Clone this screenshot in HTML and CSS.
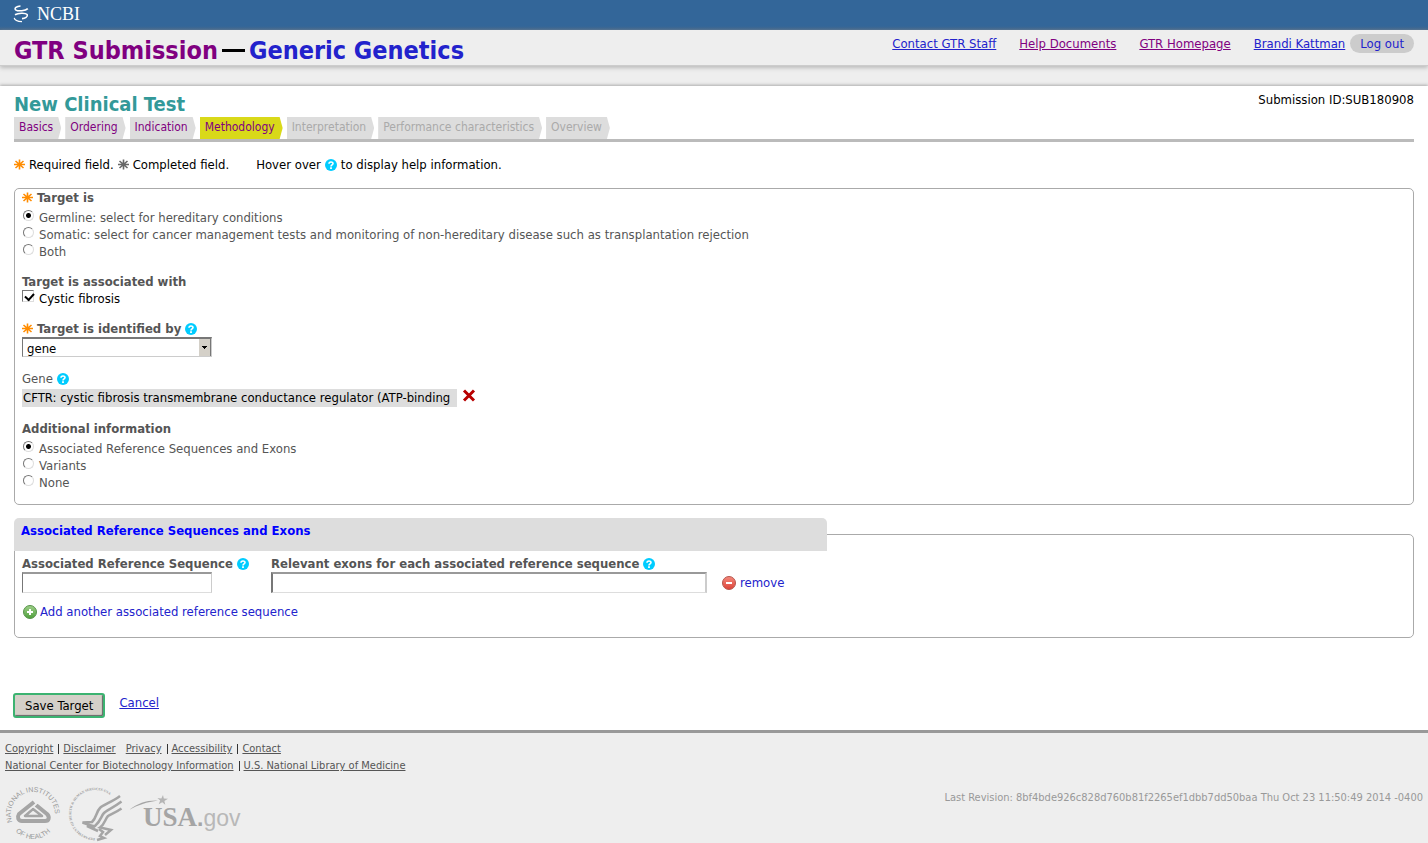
FILE: index.html
```html
<!DOCTYPE html>
<html lang="en">
<head>
    <meta charset="utf-8">
    <meta name="viewport" content="width=device-width, initial-scale=1.0">
    <title>GTR Submission</title>
    <link rel="stylesheet" href="styles.css">
</head>
<body>
    <!-- shared icons -->
    <svg class="defs" aria-hidden="true">
        <symbol id="star" viewBox="0 0 11 11">
            <path d="M5.5 .5v10M1.5 2l8 7M9.5 2l-8 7M0 5.5h11" stroke="currentColor" stroke-width="1.6"/>
        </symbol>
        <symbol id="help" viewBox="0 0 12 12">
            <circle cx="6" cy="6" r="6" fill="#0cf"/>
            <path d="M4 4.7C4 2.4 8 2.4 8 4.5C8 5.9 6 5.8 6 7.4" fill="none" stroke="#fff" stroke-width="1.6"/>
            <path d="M5.1 8.3h1.8v1.6H5.1z" fill="#fff"/>
        </symbol>
        <linearGradient id="greenball" x2="0" y2="1"><stop stop-color="#9fd08a"/><stop offset="1" stop-color="#4f9f3c"/></linearGradient>
        <linearGradient id="redball" x2="0" y2="1"><stop stop-color="#f58a7d"/><stop offset="1" stop-color="#dc4237"/></linearGradient>
    </svg>

    <div class="topbar">
        <a class="ncbi" href="#">
            <svg width="16" height="18" viewBox="0 0 16 18" fill="none" stroke="#fff" aria-hidden="true">
                <path d="M7.5 1C3.5 1.2 1 3.4 2.6 4.8C5 6.5 12.5 6 14.8 3.6" stroke-width="1.6"/>
                <path d="M2 9.8C5 8 12.5 7.6 14.2 9.6C15.2 11.8 12 13.6 9 13.6" stroke-width="1.6"/>
                <path d="M1.2 12.8C1.6 15 5 16.4 9 16.6" stroke-width="1.2"/>
            </svg>
            <span>NCBI</span>
        </a>
    </div>

    <header class="header">
        <h1><a class="visited" href="#">GTR Submission</a> <span class="dash"></span> <a href="#">Generic Genetics</a></h1>
        <nav class="toplinks">
            <a href="#">Contact GTR Staff</a>
            <a class="visited" href="#">Help Documents</a>
            <a class="visited" href="#">GTR Homepage</a>
            <span class="user"><a href="#">Brandi Kattman</a><a class="logout" href="#">Log out</a></span>
        </nav>
    </header>

    <main class="main">
        <div class="titlerow">
            <h2>New Clinical Test</h2>
            <div>Submission ID:SUB180908</div>
        </div>

        <nav class="tabs">
            <a class="tab" href="#">Basics</a>
            <a class="tab" href="#">Ordering</a>
            <a class="tab" href="#">Indication</a>
            <a class="tab current" href="#">Methodology</a>
            <span class="tab off">Interpretation</span>
            <span class="tab off">Performance characteristics</span>
            <span class="tab off">Overview</span>
        </nav>

        <div class="hints">
            <svg class="star"><use href="#star"/></svg>
            <span>Required field.</span>
            <svg class="star done"><use href="#star"/></svg>
            <span class="completed">Completed field.</span>
            <span>Hover over</span>
            <svg class="help"><use href="#help"/></svg>
            <span>to display help information.</span>
        </div>

        <form>
            <div class="panel target">
                <div class="label first"><svg class="star"><use href="#star"/></svg>Target is</div>
                <div class="choices">
                    <label><input type="radio" name="target" checked>Germline: select for hereditary conditions</label>
                    <label><input type="radio" name="target">Somatic: select for cancer management tests and monitoring of non-hereditary disease such as transplantation rejection</label>
                    <label><input type="radio" name="target">Both</label>
                </div>

                <div class="label">Target is associated with</div>
                <div class="choices dark">
                    <label><input type="checkbox" checked>Cystic fibrosis</label>
                </div>

                <div class="label"><svg class="star"><use href="#star"/></svg><label for="idby">Target is identified by</label><svg class="help"><use href="#help"/></svg></div>
                <select id="idby" class="idby">
                    <option>gene</option>
                </select>

                <div class="label gene">Gene<svg class="help"><use href="#help"/></svg></div>
                <div class="generow">
                    <span class="genevalue">CFTR: cystic fibrosis transmembrane conductance regulator (ATP-binding</span>
                    <button class="delete" type="button" aria-label="Delete gene">
                        <svg width="14" height="13" viewBox="0 0 14 13"><path d="M2 1.5l10 10M12 1.5l-10 10" stroke="#b80000" stroke-width="3"/></svg>
                    </button>
                </div>

                <div class="label">Additional information</div>
                <div class="choices">
                    <label><input type="radio" name="info" checked>Associated Reference Sequences and Exons</label>
                    <label><input type="radio" name="info">Variants</label>
                    <label><input type="radio" name="info">None</label>
                </div>
            </div>

            <fieldset class="panel refseq">
                <legend>Associated Reference Sequences and Exons</legend>
                <div class="fields">
                    <div class="field seq">
                        <div class="label"><label for="seq">Associated Reference Sequence</label><svg class="help"><use href="#help"/></svg></div>
                        <input id="seq" type="text">
                    </div>
                    <div class="field exons">
                        <div class="label"><label for="exons">Relevant exons for each associated reference sequence</label><svg class="help"><use href="#help"/></svg></div>
                        <input id="exons" type="text">
                    </div>
                    <a class="action remove" href="#">
                        <svg width="14" height="14" viewBox="0 0 14 14" aria-hidden="true"><circle cx="7" cy="7" r="6.5" fill="url(#redball)" stroke="#b5564c"/><path d="M4 7h6" stroke="#fff" stroke-width="2"/></svg>
                        remove
                    </a>
                </div>
                <a class="action add" href="#">
                    <svg width="14" height="14" viewBox="0 0 14 14" aria-hidden="true"><circle cx="7" cy="7" r="6.5" fill="url(#greenball)" stroke="#57934a"/><path d="M4 7h6M7 4v6" stroke="#fff" stroke-width="2"/></svg>
                    Add another associated reference sequence
                </a>
            </fieldset>

            <div class="buttons">
                <button class="save" type="button">Save Target</button>
                <a href="#">Cancel</a>
            </div>
        </form>
    </main>

    <footer class="footer">
        <div class="footlinks"><a href="#">Copyright</a><i></i><a href="#">Disclaimer</a><a class="privacy" href="#">Privacy</a><i></i><a href="#">Accessibility</a><i></i><a href="#">Contact</a></div>
        <div class="footlinks"><a href="#">National Center for Biotechnology Information</a><i></i><a href="#">U.S. National Library of Medicine</a></div>
        <div class="footrow">
            <div class="logos">
                <svg width="56" height="56" viewBox="0 0 56 56" role="img" aria-label="National Institutes of Health">
                    <path id="nihtop" d="M7.5 36A22 22 0 1 1 47.5 38" fill="none"/>
                    <path id="nihbottom" d="M4 29A24 24 0 0 0 52 29" fill="none"/>
                    <text class="nih"><textPath href="#nihtop">NATIONAL INSTITUTES</textPath></text>
                    <text class="nih"><textPath href="#nihbottom" startOffset="50%" text-anchor="middle">OF HEALTH</textPath></text>
                    <g fill="none" stroke="#a5a5a5" stroke-linejoin="round">
                        <path d="M29 16L14 28C12 31 13 35 17 35H40C44 35 45 31 42 28L31 19" stroke-width="4"/>
                        <path d="M28 23L20 30H37z" stroke-width="2.5"/>
                        <path d="M15 31L33 17" stroke="#eee" stroke-width="1"/>
                    </g>
                </svg>
                <svg width="56" height="56" viewBox="0 0 112 112" role="img" aria-label="Department of Health and Human Services USA">
                    <path id="hhs" d="M56 104A48 48 0 1 1 103 44" fill="none"/>
                    <text class="hhs"><textPath href="#hhs">DEPARTMENT OF HEALTH &amp; HUMAN SERVICES·USA</textPath></text>
                    <g fill="none" stroke="#a5a5a5" stroke-width="5">
                        <path d="M106 20C90 32 72 38 66 44C58 52 60 62 50 72L31 73L56 82"/>
                        <path d="M109 31C92 44 80 48 74 54C68 60 68 70 56 80L40 80L62 90"/>
                        <path d="M109 45C96 54 88 56 82 60C76 66 76 76 66 83L88 88L76 98"/>
                        <path d="M64 86L72 92L66 100L74 104L60 108"/>
                    </g>
                </svg>
                <svg width="112" height="38" viewBox="0 0 112 38" role="img" aria-label="USA.gov">
                    <path d="M0 15C9 8 18 5 29 5.5C18 7 9 10 0 15z" fill="#a5a5a5"/>
                    <path d="M34 0l.8 3.6 4.2.2-3.6 2.1.9 3.9-3.1-2.6-3.5 2.1 1.5-3.7-2.8-2.6 3.9.4z" fill="#b5b5b5"/>
                    <text x="14" y="31" class="usa">USA</text>
                    <text x="68" y="31" class="gov"><tspan class="dot">.</tspan>gov</text>
                </svg>
            </div>
            <div class="revision">Last Revision: 8bf4bde926c828d760b81f2265ef1dbb7dd50baa Thu Oct 23 11:50:49 2014 -0400</div>
        </div>
    </footer>
</body>
</html>
```
FILE: styles.css
```css
* {
  box-sizing: border-box;
}
body {
  margin: 0;
  background-color: #eee;
  color: #000;
  font-family: "DejaVu Sans Condensed", "Noto Sans", sans-serif;
  font-size: 13px;
  line-height: 17px;
}
h1, h2 {
  margin: 0;
  font-weight: 700;
}
a {
  color: #22c;
}
a.visited {
  color: #800080;
}
.defs {
  display: block;
  width: 0;
  height: 0;
}
.topbar {
  height: 30px;
  padding: 5px 13px;
  background: linear-gradient(#369 26px, #47688a 30px);
}
.ncbi {
  display: inline-flex;
  gap: 8px;
  color: #fff;
  font-family: "Liberation Serif", serif;
  font-size: 18px;
  line-height: 18px;
  text-decoration: none;
}
.header {
  display: flex;
  justify-content: space-between;
  height: 36px;
  padding: 0 14px;
  border-bottom: 1px solid #ccc;
  box-shadow: 0 2px 4px #bbb;
}
.header h1 {
  display: flex;
  align-items: center;
  gap: 4px;
  font-size: 25px;
  line-height: 36px;
  padding-top: 6px;
}
.header h1 a {
  text-decoration: none;
}
.dash {
  width: 23px;
  height: 3px;
  background-color: #000;
}
.toplinks {
  display: flex;
  gap: 23px;
  padding-top: 4px;
  line-height: 19px;
}
.user {
  display: flex;
  gap: 5px;
}
.logout {
  height: 19px;
  padding: 0 10px;
  border-radius: 10px;
  background-color: #ccc;
  text-decoration: none;
}
.main {
  margin-top: 20px;
  padding: 5px 14px 12px;
  background-color: #fff;
  box-shadow: 0 -1px 3px #aaa;
}
.titlerow {
  display: flex;
  justify-content: space-between;
  height: 26px;
}
h2 {
  color: #399;
  font-size: 20px;
  line-height: 26px;
}
.tabs {
  display: flex;
  gap: 4px;
  height: 25px;
  border-bottom: 3px solid #bbb;
}
.tab {
  height: 22px;
  padding: 0 8px 0 5px;
  background-color: #ddd;
  color: #800080;
  font-size: 12px;
  line-height: 21px;
  text-decoration: none;
  clip-path: polygon(0 0, calc(100% - 3px) 0, 100% 50%, calc(100% - 3px) 100%, 0 100%);
}
.tab.current {
  background-color: #d9d919;
}
.tab.off {
  color: #aaa;
}
.hints {
  display: flex;
  align-items: center;
  gap: 4px;
  height: 17px;
  margin-top: 14px;
}
.completed {
  margin-right: 23px;
}
.star {
  width: 11px;
  height: 11px;
  color: #ff8c00;
}
.star.done {
  color: #666;
}
.help {
  width: 12px;
  height: 12px;
}
.panel {
  margin: 0;
  border: 1px solid #aaa;
  border-radius: 5px;
}
.target {
  margin-top: 15px;
  padding: 0 7px 13px;
}
.label {
  display: flex;
  align-items: center;
  gap: 4px;
  margin-top: 13px;
  color: #555;
  font-weight: 700;
}
.label.first {
  margin-top: 0;
}
.label.gene {
  font-weight: 400;
}
.choices {
  margin-top: 3px;
  color: #555;
}
.choices.dark {
  margin-top: 0;
  color: #000;
}
.choices label {
  display: flex;
  gap: 5px;
}
input[type="radio"], input[type="checkbox"] {
  appearance: none;
  flex: none;
  width: 11px;
  height: 11px;
  margin: 1px 0 0 1px;
  border: 1px solid;
  border-color: #777 #ddd #ddd #777;
  background-color: #fff;
}
input[type="radio"] {
  border-radius: 50%;
}
input[type="radio"]:checked {
  background: radial-gradient(circle, #000 2px, #fff 3px);
}
input[type="checkbox"] {
  width: 12px;
  height: 12px;
  margin: 0;
}
input[type="checkbox"]:checked::before {
  content: "";
  display: block;
  width: 7px;
  height: 4px;
  margin: 2px 0 0 2px;
  border: solid #000;
  border-width: 0 0 2px 2px;
  transform: rotate(-48deg);
}
.idby {
  appearance: none;
  display: block;
  width: 190px;
  height: 20px;
  padding: 2px 4px 0;
  border: 1px solid;
  border-top-width: 2px;
  border-color: #777 #ccc #ccc #777;
  border-radius: 0;
  background: linear-gradient(#000, #000) right 4px top 7px / 5px 1px no-repeat,
    linear-gradient(#000, #000) right 5px top 8px / 3px 1px no-repeat,
    linear-gradient(#000, #000) right 6px top 9px / 1px 1px no-repeat,
    linear-gradient(90deg, #d4d0c8 11px, #777 11px) right / 12px 100% no-repeat,
    #fff;
  color: #000;
  font: inherit;
  line-height: 15px;
}
.generow {
  display: flex;
  gap: 5px;
  margin-top: 2px;
}
.genevalue {
  width: 435px;
  padding: 0 1px;
  background-color: #ddd;
  line-height: 18px;
}
.delete {
  height: 13px;
  padding: 0;
  border: 0;
  background: none;
  line-height: 0;
}
.refseq {
  min-width: 0;
  margin-top: 13px;
  padding: 0 7px 17px;
}
.refseq legend {
  width: 813px;
  max-width: 100%;
  height: 33px;
  margin-left: -8px;
  padding: 4px 7px;
  border-radius: 5px 5px 0 0;
  background-color: #ddd;
  color: #00f;
  font-weight: 700;
}
.refseq .label {
  margin-top: 4px;
}
.fields {
  display: flex;
  align-items: flex-end;
}
.seq {
  width: 249px;
}
.exons {
  margin-right: 15px;
}
input[type="text"] {
  display: block;
  width: 190px;
  height: 21px;
  border: 1px solid;
  border-top-width: 2px;
  border-color: #999 #ccc #ddd #777;
  font: inherit;
}
.exons input[type="text"] {
  width: 436px;
  border-left-width: 2px;
  border-right-width: 2px;
}
.action {
  display: flex;
  align-items: center;
  gap: 4px;
  text-decoration: none;
}
.remove {
  padding-bottom: 2px;
}
.add {
  gap: 3px;
  margin-top: 10px;
  padding-left: 1px;
}
.buttons {
  display: flex;
  gap: 14px;
  margin: 55px 0 0 -1px;
}
.buttons a {
  padding-top: 1px;
}
.save {
  height: 25px;
  padding: 0 10px;
  border: 2px solid #3cb371;
  border-radius: 3px;
  background-color: #d4d0c8;
  box-shadow: inset -1px -1px 1px #666;
  color: #000;
  font: inherit;
}
.footer {
  padding: 7px 5px 0;
  border-top: 3px solid #999;
}
.footlinks {
  display: flex;
  align-items: center;
}
.footlinks a, .revision {
  color: #555;
  font-size: 11px;
}
.footlinks i {
  width: 1px;
  height: 10px;
  margin: 0 4px 0 5px;
  background-color: #333;
}
.footlinks .privacy {
  margin-left: 10px;
}
.footrow {
  display: flex;
  justify-content: space-between;
  margin-top: 12px;
}
.footrow .revision {
  padding-top: 3px;
  color: #999;
}
.logos {
  display: flex;
  align-items: center;
  gap: 6px;
}
.nih {
  fill: #999;
  font: 7px "Liberation Sans", sans-serif;
}
.hhs {
  fill: #999;
  font: bold 7px "Liberation Serif", serif;
}
.usa {
  fill: #a5a5a5;
  font: bold 27px "Liberation Serif", serif;
}
.gov {
  fill: #b8b8b8;
  font: 23px "Liberation Sans", sans-serif;
}
.dot {
  fill: #a5a5a5;
  font-weight: 700;
}
```
